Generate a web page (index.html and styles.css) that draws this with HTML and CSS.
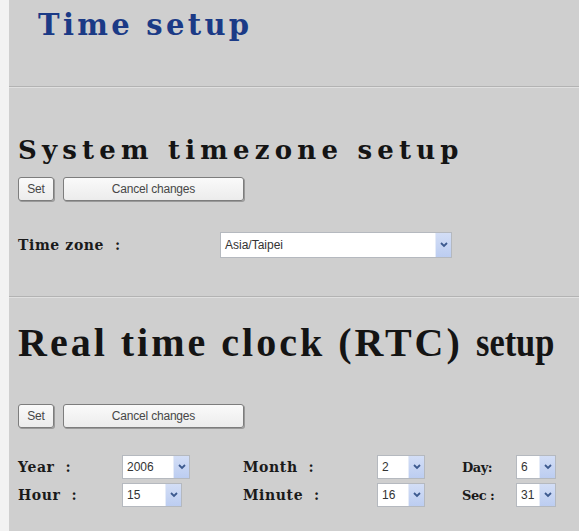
FILE: index.html
```html
<!DOCTYPE html>
<html lang="en">
<head>
<meta charset="utf-8">
<title>Time setup</title>
<link rel="stylesheet" href="styles.css">
</head>
<body>
<div class="page">
  <h1 class="title">Time setup</h1>
  <hr class="rule rule-top">

  <section class="block">
    <h2 class="heading">System timezone setup</h2>
    <div class="actions">
      <button class="btn btn-set">Set</button>
      <button class="btn btn-wide">Cancel changes</button>
    </div>
    <div class="tz-row">
      <span class="label">Time zone  :</span>
      <div class="select select-tz"><span class="value">Asia/Taipei</span><span class="arrow"><svg viewBox="0 0 8 6" width="8" height="6"><path d="M1 1 L4 4 L7 1" fill="none" stroke="#3d5a8f" stroke-width="1.8"/></svg></span></div>
    </div>
  </section>

  <hr class="rule rule-mid">

  <section class="block">
    <h2 class="heading heading-big"><span class="spaced">Real time clock (RTC)</span> <span class="narrow">setup</span></h2>
    <div class="actions actions-low">
      <button class="btn btn-set">Set</button>
      <button class="btn btn-wide">Cancel changes</button>
    </div>
    <div class="clock-grid">
      <span class="label">Year  :</span>
      <div class="select s-year"><span class="value">2006</span><span class="arrow"><svg viewBox="0 0 8 6" width="8" height="6"><path d="M1 1 L4 4 L7 1" fill="none" stroke="#3d5a8f" stroke-width="1.8"/></svg></span></div>
      <span class="label">Month  :</span>
      <div class="select s-small"><span class="value">2</span><span class="arrow"><svg viewBox="0 0 8 6" width="8" height="6"><path d="M1 1 L4 4 L7 1" fill="none" stroke="#3d5a8f" stroke-width="1.8"/></svg></span></div>
      <span class="label label-tight">Day:</span>
      <div class="select s-tiny"><span class="value">6</span><span class="arrow"><svg viewBox="0 0 8 6" width="8" height="6"><path d="M1 1 L4 4 L7 1" fill="none" stroke="#3d5a8f" stroke-width="1.8"/></svg></span></div>

      <span class="label">Hour  :</span>
      <div class="select s-hour"><span class="value">15</span><span class="arrow"><svg viewBox="0 0 8 6" width="8" height="6"><path d="M1 1 L4 4 L7 1" fill="none" stroke="#3d5a8f" stroke-width="1.8"/></svg></span></div>
      <span class="label">Minute  :</span>
      <div class="select s-small"><span class="value">16</span><span class="arrow"><svg viewBox="0 0 8 6" width="8" height="6"><path d="M1 1 L4 4 L7 1" fill="none" stroke="#3d5a8f" stroke-width="1.8"/></svg></span></div>
      <span class="label label-tight">Sec :</span>
      <div class="select s-tiny"><span class="value">31</span><span class="arrow"><svg viewBox="0 0 8 6" width="8" height="6"><path d="M1 1 L4 4 L7 1" fill="none" stroke="#3d5a8f" stroke-width="1.8"/></svg></span></div>
    </div>
  </section>
</div>
</body>
</html>
```

FILE: styles.css
```css
html, body {
  margin: 0;
  padding: 0;
  background: #f2f2f2;
}

.page {
  margin-left: 9px;
  min-height: 531px;
  background: #cfcfcf;
  padding: 0 0 0 9px;
  font-family: "Liberation Serif", "Times New Roman", serif;
  color: #111;
  overflow: hidden;
}

.title {
  margin: 0;
  padding: 8px 0 0 20px;
  height: 72px;
  font-family: "DejaVu Serif", serif;
  font-size: 29px;
  font-weight: bold;
  letter-spacing: 3.3px;
  color: #1b3a86;
  line-height: 34px;
}

.rule {
  margin: 0 0 0 -9px;
  border: 0;
  border-top: 1px solid #b3b3b3;
  border-bottom: 1px solid #e0e0e0;
  height: 0;
}

.rule-top { margin-top: 6px; }

.block {
  display: flex;
  flex-direction: column;
}

.heading {
  margin: 47px 0 0 0;
  font-family: "DejaVu Serif", serif;
  font-size: 26px;
  font-weight: bold;
  letter-spacing: 5.2px;
  line-height: 31px;
  color: #141414;
  white-space: nowrap;
}

.heading-big {
  margin-top: 22px;
  font-family: "Liberation Serif", "Times New Roman", serif;
  font-size: 40px;
  letter-spacing: 3px;
  line-height: 46px;
}

.heading-big .narrow {
  display: inline-block;
  letter-spacing: 0;
  transform: scaleX(0.86);
  transform-origin: left center;
}

.actions {
  display: flex;
  gap: 9px;
  margin-top: 11px;
}

.actions-low { margin-top: 38px; }

.btn {
  height: 24px;
  padding: 0 6px;
  font-family: "Liberation Sans", Arial, sans-serif;
  font-size: 12px;
  letter-spacing: -0.2px;
  color: #474747;
  background: linear-gradient(#fafafa, #ececec);
  border: 1px solid #7d7d7d;
  border-radius: 3px;
  box-shadow: 1px 1px 0 #9a9a9a;
}

.btn-set { width: 36px; padding: 0; }
.btn-wide { width: 181px; }

.tz-row {
  display: flex;
  align-items: center;
  margin-top: 31px;
  margin-bottom: 38px;
}

.label {
  font-family: "DejaVu Serif", serif;
  font-size: 14px;
  letter-spacing: 0.6px;
  font-weight: bold;
  color: #1a1a1a;
  white-space: pre;
}

.tz-row .label { width: 202px; }

.select {
  display: flex;
  align-items: stretch;
  box-sizing: border-box;
  height: 26px;
  background: #fff;
  border: 1px solid #b5b9bf;
  font-family: "Liberation Sans", Arial, sans-serif;
  font-size: 12px;
  color: #333;
}

.select .value {
  flex: 1;
  display: flex;
  align-items: center;
  padding-left: 4px;
}

.select .arrow {
  width: 15px;
  display: flex;
  align-items: center;
  justify-content: center;
  background: linear-gradient(#d3def6, #bccdf1);
  border-left: 1px solid #e6ecf8;
}

.select-tz { width: 232px; }

.clock-grid {
  display: grid;
  grid-template-columns: 104px 121px 134px 85px 54px 40px;
  grid-auto-rows: 24px;
  row-gap: 4px;
  align-items: center;
  margin-top: 27px;
}

.clock-grid .select { height: 24px; }

.s-year { width: 68px; }
.s-hour { width: 60px; }
.s-small { width: 48px; }
.s-tiny { width: 40px; }

.label-tight {
  font-size: 13px;
  letter-spacing: -0.5px;
}
```
